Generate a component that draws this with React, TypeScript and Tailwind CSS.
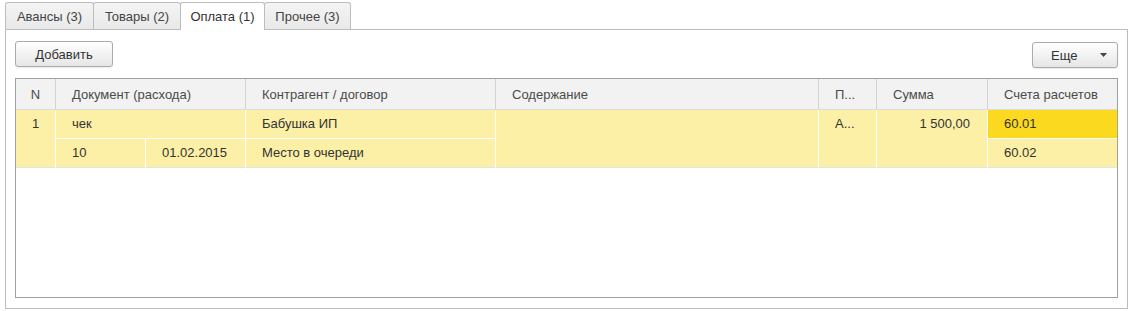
import React from "react";

const tabs = [
  { label: "Авансы (3)", w: "w-[89px]", active: false },
  { label: "Товары (2)", w: "w-[88px]", active: false },
  { label: "Оплата (1)", w: "w-[85px]", active: true },
  { label: "Прочее (3)", w: "w-[87px]", active: false },
];

const hCell = "flex items-center bg-[#f2f2f2] border-b border-[#dcdcdc] text-[#4a4a4a] pl-[16px] whitespace-nowrap overflow-hidden";
const bCell = "flex items-start bg-[#fbf0a6] text-[#333333] pt-[6px] pl-[16px] whitespace-nowrap overflow-hidden leading-[15px]";

export default function App() {
  return (
    <div
      className="w-[1130px] h-[311px] bg-white pt-[2px] pl-[5px] text-[13px] leading-[15px] text-[#333333]"
      style={{ fontFamily: '"Liberation Sans", Arial, sans-serif' }}
    >
      <div className="flex h-[27px] items-start">
        {tabs.map((t, i) => (
          <div
            key={t.label}
            className={
              (i > 0 ? "-ml-px " : "") +
              t.w +
              " flex items-center justify-center border-t border-l border-r border-[#bdbdbd] rounded-t-[3px] " +
              (t.active
                ? "relative z-10 h-[28px] bg-white text-[#333333]"
                : "h-[27px] bg-gradient-to-b from-[#f4f4f4] to-[#e9e9e9] text-[#444444]")
            }
          >
            {t.label}
          </div>
        ))}
      </div>
      <div className="w-[1123px] h-[280px] border border-[#bcbcbc] pt-[11px] pl-[9px] pr-[9px] pb-[10px] flex flex-col">
        <div className="flex justify-between h-[26px]">
          <button className="w-[98px] h-[26px] border border-[#ababab] rounded-[3px] bg-gradient-to-b from-[#ffffff] to-[#e6e6e6] text-[#333333] shadow-[0_1px_1px_rgba(0,0,0,0.08)]">
            Добавить
          </button>
          <button className="w-[86px] h-[26px] mt-px border border-[#ababab] rounded-[3px] bg-gradient-to-b from-[#ffffff] to-[#e6e6e6] text-[#333333] flex items-center pl-[18px] pr-[10px] justify-between shadow-[0_1px_1px_rgba(0,0,0,0.08)]">
            <span>Еще</span>
            <svg width="7" height="4" viewBox="0 0 7 4">
              <path d="M0 0h7L3.5 4z" fill="#444444" />
            </svg>
          </button>
        </div>
        <div className="mt-[11px] h-[220px] border border-[#a0a0a0] bg-white">
          <div className="grid grid-cols-[40px_90px_100px_250px_323px_58px_111px_129px] grid-rows-[31px_29px_29px]">
            <div className={hCell + " border-r border-r-[#d2d2d2] justify-center !pl-0"}>N</div>
            <div className={hCell + " col-span-2 border-r border-r-[#d2d2d2]"}>Документ (расхода)</div>
            <div className={hCell + " border-r border-r-[#d2d2d2]"}>Контрагент / договор</div>
            <div className={hCell + " border-r border-r-[#d2d2d2]"}>Содержание</div>
            <div className={hCell + " border-r border-r-[#d2d2d2]"}>П...</div>
            <div className={hCell + " border-r border-r-[#d2d2d2]"}>Сумма</div>
            <div className={hCell}>Счета расчетов</div>

            <div className={bCell + " row-span-2 justify-center !pl-0 border-r border-white border-b border-b-[#e4e4e4]"}>1</div>
            <div className={bCell + " col-span-2 border-r border-b border-white"}>чек</div>
            <div className={bCell + " border-r border-b border-white"}>Бабушка ИП</div>
            <div className={bCell + " row-span-2 border-r border-white border-b border-b-[#e4e4e4]"}></div>
            <div className={bCell + " row-span-2 border-r border-white border-b border-b-[#e4e4e4]"}>А...</div>
            <div className={bCell + " row-span-2 justify-end pr-[17px] border-r border-white border-b border-b-[#e4e4e4]"}>1 500,00</div>
            <div className={bCell + " !bg-[#fad91f] border-b border-white text-[#222222]"}>60.01</div>

            <div className={bCell + " border-r border-white border-b border-b-[#e4e4e4]"}>10</div>
            <div className={bCell + " border-r border-white border-b border-b-[#e4e4e4]"}>01.02.2015</div>
            <div className={bCell + " border-r border-white border-b border-b-[#e4e4e4]"}>Место в очереди</div>
            <div className={bCell + " border-b border-b-[#e4e4e4]"}>60.02</div>
          </div>
        </div>
      </div>
    </div>
  );
}
